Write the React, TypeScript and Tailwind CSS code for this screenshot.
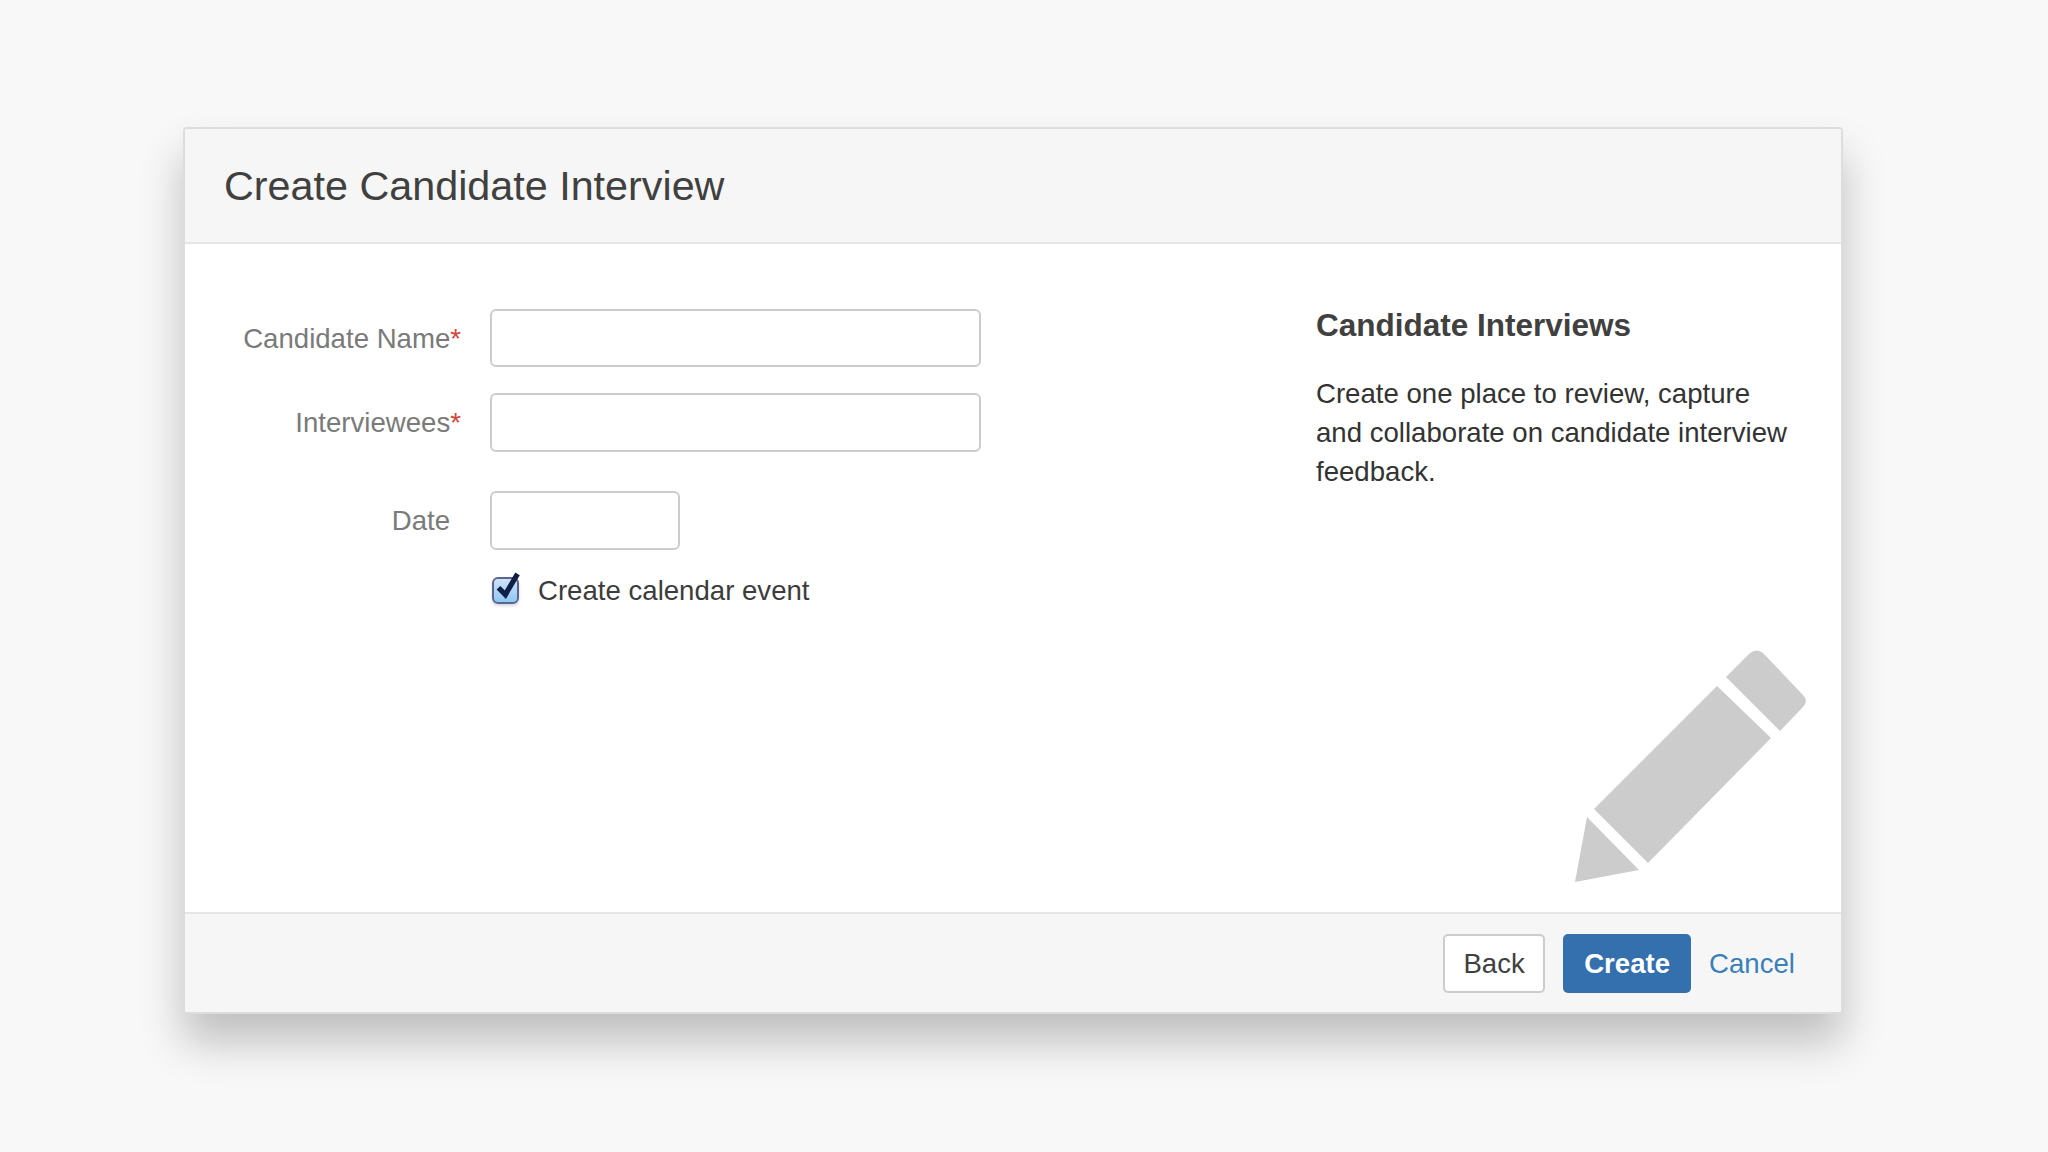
import React from "react";

const PencilIcon = () => (
  <svg viewBox="0 0 232 232" className="w-[232px] h-[232px] self-end fill-[#cccccc]">
    <path d="M151 27 L175 3 Q182 -2 188 3 L228 45 Q234 51 228 57 L205 81 Z" />
    <path d="M142 36 L196 88 L73 213 L19 159 Z" />
    <path d="M12 167 L64 220 L0 232 Z" />
  </svg>
);

const Field = ({ label, required, inputClass }: { label: string; required?: boolean; inputClass: string }) => (
  <div className="flex items-center">
    <label className={`w-[276px] pt-[1px] text-right text-[27.6px] text-[#7a7a7a] ${required ? "" : "pr-[11px]"}`}>
      {label}
      {required && <span className="text-[#d0453a]">*</span>}
    </label>
    <input type="text" className={`ml-[29px] bg-white border-2 border-[#cccccc] rounded-[6px] ${inputClass}`} />
  </div>
);

export default function App() {
  return (
    <div className="min-h-[1152px] bg-[#f8f8f8] pl-[183px] pt-[127px] font-['Liberation_Sans',Arial,sans-serif]">
      <div className="w-[1660px] h-[887px] flex flex-col bg-white border-2 border-[#dddddd] rounded-[4px] shadow-[0_28px_44px_rgba(0,0,0,0.23)]">
        <header className="h-[115px] flex items-center pl-[39px] pt-[2px] bg-[#f6f6f6] border-b-2 border-[#e6e6e6] rounded-t-[4px]">
          <h1 className="text-[41.3px] text-[#404040]">Create Candidate Interview</h1>
        </header>

        <main className="flex-1 flex min-h-0">
          <form className="w-[1131px] shrink-0 pt-[65px]">
            <div className="flex flex-col gap-[26px]">
              <Field label="Candidate Name" required inputClass="w-[491px] h-[58px]" />
              <Field label="Interviewees" required inputClass="w-[491px] h-[59px]" />
            </div>
            <div className="mt-[39px]">
              <Field label="Date" inputClass="w-[190px] h-[59px]" />
            </div>
            <label className="mt-[20px] ml-[307px] flex items-center gap-[19px] text-[27.6px] text-[#3c3c3c]">
              <span className="relative w-[27px] h-[27px] rounded-[6px] border-2 border-[#5a6590] bg-gradient-to-b from-[#cfe2f8] to-[#8fc8f5] shadow-[0_2px_3px_rgba(90,100,140,0.25)]">
                <svg viewBox="0 0 30 34" className="absolute left-[1px] top-[-8px] w-[26px] h-[30px]">
                  <path d="M4 19 L12 27 L26 3" fill="none" stroke="#0f1f45" strokeWidth="6" />
                </svg>
              </span>
              Create calendar event
            </label>
          </form>

          <aside className="flex-1 flex flex-col justify-between pt-[58px] pb-[30px] pr-[34px]">
            <div>
              <h2 className="text-[31.5px] font-bold text-[#404040]">Candidate Interviews</h2>
              <p className="mt-[25px] w-[480px] text-[27.6px] leading-[39px] text-[#333333]">
                Create one place to review, capture and collaborate on candidate interview feedback.
              </p>
            </div>
            <PencilIcon />
          </aside>
        </main>

        <footer className="h-[100px] flex items-center justify-end pt-[1px] pr-[46px] bg-[#f6f6f6] border-t-2 border-[#e6e6e6] rounded-b-[4px]">
          <button className="w-[102px] h-[59px] bg-white border-2 border-[#cccccc] rounded-[5px] text-[27.6px] text-[#404040]">
            Back
          </button>
          <button className="ml-[18px] w-[128px] h-[59px] bg-[#3470ae] rounded-[5px] text-[27.6px] font-bold text-white">
            Create
          </button>
          <a className="ml-[18px] text-[27.6px] text-[#3b7fb8]">Cancel</a>
        </footer>
      </div>
    </div>
  );
}
